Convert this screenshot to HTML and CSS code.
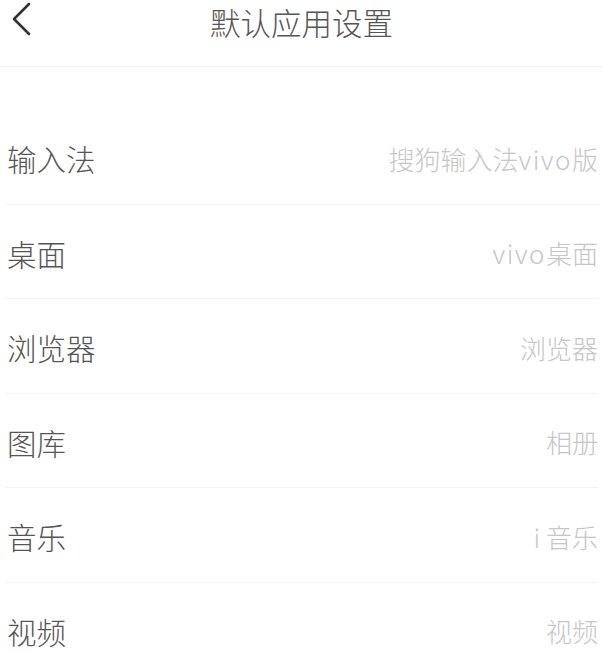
FILE: index.html
```html
<!DOCTYPE html>
<html lang="zh-CN">
<head>
    <meta charset="UTF-8">
    <meta name="viewport" content="width=device-width, initial-scale=1.0">
    <title>默认应用设置</title>
    <link rel="stylesheet" href="styles.css">
</head>
<body>
    <div class="page">
        <div class="header">
            <a class="back" href="#">
                <svg width="22" height="36" viewBox="0 0 22 36">
                    <polyline points="19,3 4,18 19,33" fill="none" stroke="#333" stroke-width="2.6" stroke-linecap="round" stroke-linejoin="round"/>
                </svg>
            </a>
            <h1 class="title">默认应用设置</h1>
            <span></span>
        </div>

        <div class="list">
            <div class="row">
                <span class="label">输入法</span>
                <span class="value">搜狗输入法<span class="latin">vivo</span>版</span>
            </div>
            <div class="row">
                <span class="label">桌面</span>
                <span class="value"><span class="latin">vivo</span>桌面</span>
            </div>
            <div class="row">
                <span class="label">浏览器</span>
                <span class="value">浏览器</span>
            </div>
            <div class="row">
                <span class="label">图库</span>
                <span class="value">相册</span>
            </div>
            <div class="row">
                <span class="label">音乐</span>
                <span class="value">i 音乐</span>
            </div>
            <div class="row">
                <span class="label">视频</span>
                <span class="value">视频</span>
            </div>
        </div>
    </div>
</body>
</html>
```

FILE: styles.css
```css
body {
    margin: 0;
    background: #fff;
    font-family: "Noto Sans CJK SC", "Noto Sans", sans-serif;
    font-weight: 300;
    overflow: hidden;
}
.page {
    width: 603px;
}
.header {
    height: 66px;
    display: grid;
    grid-template-columns: 1fr auto 1fr;
    align-items: start;
    border-bottom: 1px solid #f3f3f3;
}
.back {
    display: block;
    padding: 1px 0 0 10px;
    line-height: 0;
}
.title {
    margin: 0;
    font-size: 30.5px;
    font-weight: 300;
    line-height: 44px;
    color: #555;
}
.list {
    margin: 43px 5px 0 5px;
}
.row {
    height: 94.5px;
    box-sizing: border-box;
    padding-top: 3px;
    display: flex;
    align-items: center;
    justify-content: space-between;
    border-bottom: 1px solid #f3f3f3;
}
.label {
    padding-left: 2px;
    font-size: 29.5px;
    color: #555;
}
.value {
    font-size: 26px;
    color: #c6c6c6;
}
.latin {
    letter-spacing: 1.5px;
}
```
